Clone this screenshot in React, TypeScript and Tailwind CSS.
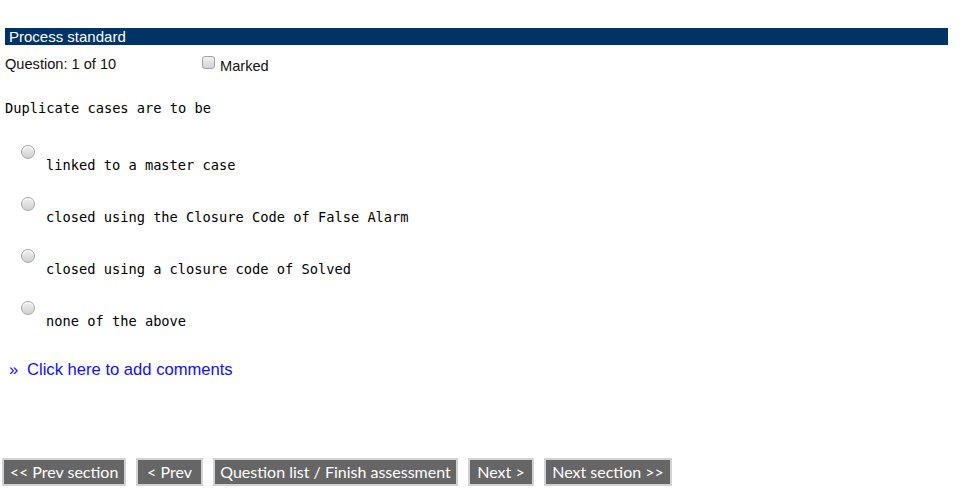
import React from "react";

const options = [
  "linked to a master case",
  "closed using the Closure Code of False Alarm",
  "closed using a closure code of Solved",
  "none of the above",
];

const buttons: { label: string; w: string }[] = [
  { label: "<< Prev section", w: "w-[124px]" },
  { label: "< Prev", w: "w-[67px]" },
  { label: "Question list / Finish assessment", w: "w-[245px]" },
  { label: "Next >", w: "w-[66px]" },
  { label: "Next section >>", w: "w-[128px]" },
];

function Radio() {
  return (
    <div className="w-[14px] h-[14px] rounded-full border border-[#a6a6a6] bg-gradient-to-b from-[#f2f2f2] to-[#cfcfcf] shadow-[inset_0_1px_0_#fff]" />
  );
}

export default function App() {
  return (
    <div className="w-[979px] h-[497px] bg-white relative overflow-hidden" style={{ fontFamily: '"Liberation Sans", Arial, sans-serif' }}>
      <div className="pt-[28px] pl-[5px]">
        <div className="w-[943px] h-[17px] bg-[#003366] text-white text-[15px] leading-[17px] pl-[4px]">
          Process standard
        </div>
        <div className="mt-[10px] flex items-start text-[14.6px] leading-[16px] text-[#111]">
          <div className="w-[197px] mt-[1px]">Question: 1 of 10</div>
          <div className="flex items-start">
            <div className="mt-[1px] w-[13px] h-[13px] rounded-[3px] border border-[#a0a0a0] bg-gradient-to-b from-[#f2f2f2] to-[#d2d2d2]" />
            <div className="ml-[5px] mt-[3px]">Marked</div>
          </div>
        </div>
        <div
          className="mt-[26px] text-[13.7px] leading-[16px] text-black"
          style={{ fontFamily: '"DejaVu Sans Mono", "Liberation Mono", monospace' }}
        >
          Duplicate cases are to be
        </div>
        <div className="mt-[29px] flex flex-col">
          {options.map((o) => (
            <div key={o} className="h-[52px] flex flex-col">
              <div className="ml-[16px]">
                <Radio />
              </div>
              <div
                className="-mt-[2px] ml-[41px] text-[13.7px] leading-[16px] text-black"
                style={{ fontFamily: '"DejaVu Sans Mono", "Liberation Mono", monospace' }}
              >
                {o}
              </div>
            </div>
          ))}
        </div>
        <div className="mt-[8px] flex text-[16.6px] leading-[18px] text-[#1010ff]">
          <span className="ml-[4px] w-[18px]">»</span>
          <span>Click here to add comments</span>
        </div>
      </div>
      <div className="absolute left-[2px] top-[458px] flex gap-[10px]" style={{ fontFamily: "Lato, sans-serif" }}>
        {buttons.map((b) => (
          <div
            key={b.label}
            className={`${b.w} h-[28px] border-2 border-[#d2d2d2] bg-[#666666] text-white text-[16px] leading-[24px] text-center whitespace-nowrap`}
          >
            {b.label}
          </div>
        ))}
      </div>
    </div>
  );
}
